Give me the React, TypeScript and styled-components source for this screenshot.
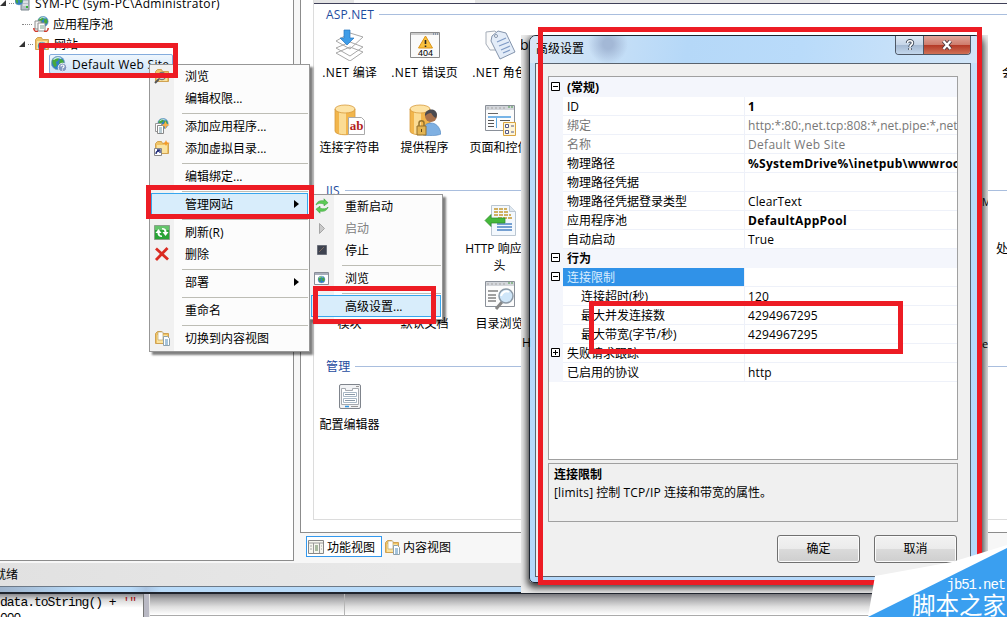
import React from "react";
import styled, { createGlobalStyle } from "styled-components";

const Global = createGlobalStyle`
  html, body { margin: 0; padding: 0; overflow: hidden; }
  body { font: 12px "Open Sans", "Noto Sans CJK SC", sans-serif; color: #000; background: #fff; }
  * { box-sizing: border-box; }
  svg { display: block; flex: none; }
`;

const Screen = styled.div`
  position: relative;
  width: 1007px;
  height: 617px;
  overflow: hidden;
  display: flex;
  flex-direction: column;
  white-space: nowrap;
`;

const T = styled.span<{ $sp?: number }>`
  letter-spacing: ${(p) => p.$sp ?? 0}px;
`;

/* ---------- manager window ---------- */
const Work = styled.div`
  display: flex;
  height: 563px;
  background: #f7f7f7;
`;
const Tree = styled.div`
  width: 294px;
  height: 561px;
  background: #fff;
  border-right: 1px solid #8c8c8c;
  border-bottom: 1px solid #8c8c8c;
  overflow: hidden;
`;
const TreeRow = styled.div<{ $indent: number; $first?: boolean }>`
  display: flex;
  align-items: center;
  height: ${(p) => (p.$first ? 18 : 20)}px;
  margin-top: ${(p) => (p.$first ? -6 : 0)}px;
  margin-bottom: ${(p) => (p.$first ? 2 : 0)}px;
  padding-left: ${(p) => p.$indent}px;
  gap: 4px;
`;
const Dots = styled.i<{ $w: number }>`
  width: ${(p) => p.$w}px;
  border-top: 1px dotted #888;
  margin-right: -3px;
`;
const Twist = styled.i`
  width: 0;
  height: 0;
  border-left: 6px solid transparent;
  border-bottom: 6px solid #333;
  margin-right: -1px;
`;
const Selected = styled.div`
  display: flex;
  align-items: center;
  gap: 5px;
  width: 124px;
  height: 20px;
  padding-left: 1px;
  border: 1px solid #84acdd;
  border-radius: 2px;
  background: linear-gradient(#eef6fd, #cfe4f8);
`;
const Right = styled.div`
  flex: 1;
  margin-left: 6px;
  display: flex;
  flex-direction: column;
  min-width: 0;
`;
const RightFrame = styled.div`
  height: 533px;
  border-left: 1px solid #8c8c8c;
  border-bottom: 1px solid #8c8c8c;
  background: #fff;
  padding-left: 12px;
`;
const Pane = styled.div`
  height: 520px;
  border-left: 1px solid #dcdcdc;
  border-bottom: 1px solid #dcdcdc;
  overflow: hidden;
`;
const PaneTop = styled.div`
  height: 4px;
  border-bottom: 1px solid #3f4058;
  background: linear-gradient(90deg, #e4e4e4 40px, #fafafa 40px, #fafafa 161px, #e4e4e4 161px, #e4e4e4 516px, #fafafa 516px);
`;
const Section = styled.div`
  height: 20px;
  padding-left: 12px;
  display: flex;
  align-items: center;
  gap: 5px;
  color: #1e4ca0;
  letter-spacing: 0.15px;
  &::after {
    content: "";
    flex: 1;
    border-top: 1px solid #a9bede;
  }
`;
const Tiles = styled.div`
  display: grid;
  grid-template-columns: repeat(3, 75px);
  grid-auto-rows: 75px;
  margin-bottom: 6px;
  margin-left: -2px;
`;
const Tile = styled.div`
  display: flex;
  flex-direction: column;
  align-items: center;
  padding-top: 5px;
  gap: 3px;
  line-height: 17px;
  text-align: center;
`;
const Views = styled.div`
  display: flex;
  align-items: center;
  height: 30px;
  padding: 0 0 3px 6px;
  gap: 2px;
`;
const ViewTab = styled.div<{ $on?: boolean }>`
  display: flex;
  align-items: center;
  gap: 3px;
  height: 21px;
  width: 76px;
  padding-left: ${(p) => (p.$on ? 1 : 0)}px;
  border: ${(p) => (p.$on ? "1px solid #3399ee" : "0")};
  background: ${(p) => (p.$on ? "#fff" : "none")};
`;
const Status = styled.div`
  height: 23px;
  line-height: 24px;
  margin-left: -6px;
  background: linear-gradient(90deg, #e1e1e1, #e8e8e8 40%);
`;
const FrameEdge = styled.div`
  height: 8px;
  border-top: 1px solid #6d7a88;
  border-bottom: 2px solid #20252e;
  background: linear-gradient(90deg, #9fb4cc, #b9dbf9 8%, #b9dbf9 13%, #a9c4e2 14.5%, #b9dbf9 16%);
`;
const Editor = styled.div`
  flex: 1;
  display: flex;
  background: linear-gradient(#77777c, #a8a8aa 20%, #dedede 55%, #fff 90%);
`;
const Code = styled.div`
  width: 144px;
  height: 23px;
  overflow: hidden;
  padding-top: 1px;
  border-right: 1px solid #777;
  font: 13px/16px "Liberation Mono", "Noto Sans CJK SC", monospace;
  letter-spacing: -1px;
  background: linear-gradient(#8a8a8e, #d8d8d8 25%, #fff 60%);
`;
const Quote = styled.span`
  color: #a31515;
`;
const Blank = styled.div<{ $w?: number }>`
  ${(p) => (p.$w ? `width: ${p.$w}px; border-right: 1px solid #b5b5b5;` : "flex: 1;")}
  border-bottom: 1px solid #aaa;
  height: 22px;
`;
const Rail = styled.div`
  width: 6px;
  height: 23px;
  background: #b9b9c4;
  border-right: 1px solid #e8e8e8;
`;

/* ---------- menus ---------- */
const Menu = styled.div<{ $x: number; $y: number; $w: number; $h: number }>`
  position: absolute;
  left: ${(p) => p.$x}px;
  top: ${(p) => p.$y}px;
  width: ${(p) => p.$w}px;
  height: ${(p) => p.$h}px;
  border: 1px solid #979797;
  background: linear-gradient(90deg, #f1f1f1 24px, #fcfcfc 24px);
  box-shadow: 3px 3px 2px rgba(0, 0, 0, 0.5);
`;
const Item = styled.div<{ $on?: boolean; $off?: boolean }>`
  display: flex;
  align-items: center;
  height: 22px;
  margin: 0 1px 0 1px;
  padding-left: 2px;
  color: ${(p) => (p.$off ? "#808080" : "#000")};
  border: 1px solid ${(p) => (p.$on ? "#37a6ee" : "transparent")};
  background: ${(p) => (p.$on ? "#d8edfb" : "transparent")};
`;
const Slot = styled.span`
  width: 31px;
  flex: none;
`;
const Arrow = styled.i`
  margin-left: auto;
  margin-right: 8px;
  border: 4px solid transparent;
  border-left: 5px solid #000;
  border-right: 0;
`;
const Sep = styled.div`
  height: 6px;
  margin: 0 1px 0 32px;
  padding-top: 4px;
  &::after {
    content: "";
    display: block;
    border-top: 1px solid #bdbdb5;
  }
`;

/* ---------- dialog ---------- */
const DialogShade = styled.div`
  position: absolute;
  left: 521px;
  top: 35px;
  width: 467px;
  height: 558px;
  overflow: hidden;
  background: #ececec;
  display: flex;
  padding: 0 6px 10px 8px;
`;
const Peek = styled.span<{ $x: number; $y: number; $s?: number }>`
  position: absolute;
  left: ${(p) => p.$x}px;
  top: ${(p) => p.$y}px;
  font-size: ${(p) => p.$s ?? 12}px;
  line-height: 16px;
  z-index: 1;
`;
const Dialog = styled.div`
  position: relative;
  width: 453px;
  flex: none;
  height: 548px;
  border: 1px solid #1b2430;
  border-radius: 7px 7px 5px 5px;
  background: linear-gradient(180deg, #c9e1f8 0, #b9dbfb 30%, #b4d8fa);
  padding: 0 10px 6px 5px;
  box-shadow: 0 3px 7px 2px rgba(0, 0, 0, 0.75);
`;
const TitleBar = styled.div`
  display: flex;
  justify-content: space-between;
  height: 27px;
  line-height: 26px;
  margin: 0 -10px 0 -5px;
  padding: 0 10px 0 6px;
  border-radius: 6px 6px 0 0;
  background: radial-gradient(circle at 78px 8px, #a3b8d6 0 5px, transparent 20px), linear-gradient(100deg, #d9e7f5, #b5d8f8 35%, #b9dbfa 60%, #d3e6f8);
`;
const Caption = styled.div`
  display: flex;
  height: 19px;
  border: 1px solid #4e5866;
  border-top: 0;
  border-radius: 0 0 4px 4px;
  overflow: hidden;
`;
const CapButton = styled.div<{ $close?: boolean }>`
  width: ${(p) => (p.$close ? 46 : 28)}px;
  display: flex;
  align-items: center;
  justify-content: center;
  background: ${(p) =>
    p.$close
      ? "linear-gradient(#e2a59a, #cf7d6d 48%, #b53a27 52%, #cf7156)"
      : "linear-gradient(#dfe9f5, #c6d5e7 48%, #a5b9d2 52%, #c3d7ec)"};
  border-right: ${(p) => (p.$close ? "0" : "1px solid #4e5866")};
`;
const Client = styled.div`
  height: 514px;
  border: 1px solid #59626d;
  background: #f0f0f0;
  padding: 12px 11px 0 12px;
`;
const Grid = styled.div`
  width: 410px;
  height: 384px;
  border: 1px solid #a0a0a0;
  background: #fff;
`;
const Prop = styled.div<{ $cat?: boolean; $off?: boolean; $first?: boolean }>`
  display: flex;
  height: ${(p) => (p.$first ? 20 : 19)}px;
  padding-top: ${(p) => (p.$first ? 1 : 0)}px;
  line-height: 20px;
  font-weight: ${(p) => (p.$cat ? 700 : 400)};
  color: ${(p) => (p.$off ? "#777" : "#000")};
  background: ${(p) => (p.$cat ? "#f4f6fc" : "#fff")};
`;
const Gutter = styled.div`
  width: 14px;
  background: #f4f6fc;
  padding: 4px 0 0 2px;
`;
const Name = styled.div<{ $sub?: boolean; $sel?: boolean; $cat?: boolean }>`
  width: 181px;
  padding-left: ${(p) => (p.$sub ? 18 : 4)}px;
  color: ${(p) => (p.$sel ? "#d9edff" : "inherit")};
  background: ${(p) => (p.$sel ? "#3092e8" : "none")};
  border-bottom: 1px solid ${(p) => (p.$cat ? "transparent" : "#eef1f9")};
`;
const Value = styled.div<{ $bold?: boolean; $sp?: number }>`
  flex: 1;
  overflow: hidden;
  padding-left: 3px;
  border-left: 1px solid #eef1f9;
  border-bottom: 1px solid #eef1f9;
  font-weight: ${(p) => (p.$bold ? 700 : 400)};
  letter-spacing: ${(p) => p.$sp ?? 0.12}px;
`;
const Help = styled.div`
  width: 410px;
  height: 59px;
  margin-top: 3px;
  border: 1px solid #a0a0a0;
  padding: 2px 5px;
  line-height: 18px;
`;
const Actions = styled.div`
  display: flex;
  justify-content: flex-end;
  gap: 14px;
  width: 409px;
  margin-top: 13px;
`;
const Button = styled.div`
  width: 83px;
  height: 28px;
  line-height: 26px;
  text-align: center;
  border: 1px solid #707070;
  border-radius: 3px;
  box-shadow: inset 0 0 0 1px #fbfbfb;
  background: linear-gradient(#f2f2f2, #ebebeb 48%, #dadada 52%, #cecece);
`;

const SideStrip = styled.div`
  position: absolute;
  left: 988px;
  top: 35px;
  width: 19px;
  height: 550px;
  overflow: hidden;
  background: linear-gradient(#fff 155px, #a9bede 155px, #a9bede 156px, #fff 156px, #fff 331px, #a9bede 331px, #a9bede 332px, #fff 332px, #fff 484px, #dcdcdc 484px, #dcdcdc 485px, #fff 485px, #fff 497px, #8c8c8c 497px, #8c8c8c 498px, #f7f7f7 498px, #f7f7f7 528px, #e8e8e8 528px);
`;

const Mark = styled.div<{ $x: number; $y: number; $w: number; $h: number }>`
  position: absolute;
  left: ${(p) => p.$x}px;
  top: ${(p) => p.$y}px;
  width: ${(p) => p.$w}px;
  height: ${(p) => p.$h}px;
  border: 5px solid #ed1c24;
`;
const Watermark = styled.div`
  position: absolute;
  left: 867px;
  top: 545px;
  width: 140px;
  height: 72px;
  color: #fff;
  text-align: right;
  > svg { position: absolute; inset: 0; }
`;
const Site = styled.div`
  position: relative;
  padding: 32px 2px 0 0;
  font: 14px/16px "Liberation Mono", monospace;
  letter-spacing: -1.1px;
`;
const Brand = styled.div`
  position: relative;
  font: 23.5px/22px "Noto Sans CJK SC", sans-serif;
  padding-right: 1px;
`;

/* ---------- icons ---------- */
const S16 = ({ children }: { children: React.ReactNode }) => (
  <svg width="16" height="16" viewBox="0 0 16 16">{children}</svg>
);
const S32 = ({ children }: { children: React.ReactNode }) => (
  <svg width="32" height="32" viewBox="0 0 32 32">{children}</svg>
);
const GlobeShape = ({ x, y, r }: { x: number; y: number; r: number }) => (
  <g transform={`translate(${x} ${y}) scale(${r / 6})`}>
    <circle r="6" fill="#2f7fc6" stroke="#7fa5bd" strokeWidth=".7" />
    <path d="M-5 -3 Q-2 -6 1 -5 L0 -2 L-2 -1 L-1 2 L-3 4 L-5 0Z M2 -4 L5 -2 L5 2 L2 3 L1 0Z" fill="#48a83c" />
    <path d="M-4 -3 Q-1 -6 3 -4" stroke="#d5eefb" fill="none" />
  </g>
);
const ServerIcon = () => (
  <S16>
    <path d="M6 1h8v14H6z" fill="#b6c0c8" stroke="#7b858e" />
    <path d="M8 4h5M8 7h5M8 10h5" stroke="#fff" />
    <path d="M11 12h2" stroke="#35b335" strokeWidth="2" />
    <GlobeShape x={4} y={6} r={4} />
  </S16>
);
const PoolIcon = () => (
  <S16>
    <GlobeShape x={10} y={5.5} r={5.2} />
    <path d="M2 5h6v8H2z" fill="#f4f4f4" stroke="#8d8d8d" />
    <path d="M5 7h7v8H5z" fill="#fff" stroke="#8d8d8d" />
    <path d="M7 10h4M7 12h4" stroke="#76a38d" />
    <path d="M.8 12c0 3 2 4 4 3M15.200 12c0 3-2 4-4 3" stroke="#d0392c" strokeWidth="1.500" fill="none" />
  </S16>
);
const FolderIcon = ({ kind }: { kind?: "globe" | "find" | "link" | "page" }) => (
  <S16>
    <path d="M1.500 3.500l2-2h4l1 2h6v10h-13z" fill="#efc365" stroke="#d0a252" />
    <path d="M3 5h10v8H3z" fill="#fae3a0" />
    {kind === "globe" && <GlobeShape x={8} y={10} r={4} />}
    {kind === "find" && (
      <g><circle cx="8" cy="8" r="3.500" fill="#e5f2fb" stroke="#777" strokeWidth="1.300" /><path d="M5 11l-4 4" stroke="#555" strokeWidth="2" /></g>
    )}
    {kind === "link" && (
      <g><path d="M.5 8.500h7v7h-7z" fill="#fff" stroke="#888" /><path d="M2 14c0-2 1-3 3-3M3 10h3v3" stroke="#232f7a" fill="none" strokeWidth="1.300" /><path d="M12 0l1 2.300 3 .7-3 1-1 2-1-2-2-1 2-.7z" fill="#f59a28" /></g>
    )}
    {kind === "page" && (
      <g><path d="M4 2h5v8H4z" fill="#fff" stroke="#bba46b" strokeWidth=".7" /><path d="M9.500 6.500h4l2 2v7h-6z" fill="#fff" stroke="#8da2ae" /><path d="M11 10h3M11 12h3M11 14h3" stroke="#4a88b8" /></g>
    )}
  </S16>
);
const SiteIcon = () => (
  <S16>
    <GlobeShape x={7} y={7} r={6.7} />
    <circle cx="11.500" cy="11.500" r="4.300" fill="#8298c0" stroke="#e8eefa" />
    <path d="M10 10.500c0-2 3-2 3 0 0 1-1.500 1-1.500 2M11.500 13.500v1" stroke="#fff" fill="none" strokeWidth="1.200" />
  </S16>
);
const AddAppIcon = () => (
  <S16>
    <GlobeShape x={9} y={5.5} r={5.2} />
    <path d="M1.500 5.500h6v8h-6z" fill="#fff" stroke="#999" />
    <path d="M3.500 7.500h6v8h-6z" fill="#fff" stroke="#888" />
    <path d="M5 10h3M5 12h3M5 14h3" stroke="#7397a5" />
    <path d="M11.500 3l1.200 2.800 3 1.200-3 1.200-1.200 3-1.200-3-3-1.200 3-1.200z" fill="#f8b04c" />
  </S16>
);
const RefreshIcon = () => (
  <S16>
    <path d="M.5 1.500h15v14H.5z" fill="#28a336" stroke="#8aa08a" />
    <path d="M1 2h14v4H1z" fill="#64c46b" />
    <path d="M1.500 9l3-4 3 4H5.500c0 2 1 2.500 2.500 2.500v1.500c-3 0-4.500-1.500-4.500-4z" fill="#fff" />
    <path d="M14.500 8l-3 4-3-4h2c0-2-1-2.500-2.500-2.500V4c3 0 4.500 1.500 4.500 4z" fill="#fff" />
  </S16>
);
const DeleteIcon = () => (
  <S16><path d="M2 2.500l12 11M13.500 2L2 14" stroke="#da2b21" strokeWidth="2.800" /></S16>
);
const RestartIcon = () => (
  <S16>
    <path d="M2 7c1-4 5-5 8-4V.8l4 4-4 3V6C7 5 4 5 2 7z M14 9c-1 4-5 5-8 4v2.200l-4-4 4-3v2c3 1 6 1 8-1z" fill="#5ccb55" stroke="#3aa33c" strokeWidth=".6" />
  </S16>
);
const PlayIcon = () => (
  <S16><path d="M5.500 3.500l5 5-5 5z" fill="#c9c9c9" stroke="#a5a5a5" /></S16>
);
const StopIcon = () => (
  <S16><path d="M3.500 3.500h9v9h-9z" fill="#3e4350" stroke="#6b6f7a" /><path d="M5 10l5-5" stroke="#7d6a63" /></S16>
);
const BrowserIcon = () => (
  <S16><path d="M.5 2.500h14v12H.5z" fill="#fff" stroke="#888d96" /><path d="M1 3h13v2H1z" fill="#a9aebb" /><GlobeShape x={7.5} y={9.5} r={3.5} /></S16>
);
const FeaturesIcon = () => (
  <S16><path d="M.5 1.500h15v13H.5z" fill="#f6f6ef" stroke="#878787" /><path d="M1 4h14M5.500 4v10M11.500 4v10" stroke="#9a9a9a" /><path d="M7 7h3M7 9h3M7 11h3" stroke="#5b7c51" /><path d="M2 7h2M2 10h2M13 7h1M13 10h1" stroke="#aaa" /></S16>
);
const CompileIcon = () => (
  <S32>
    <path d="M2 24l14-6 13 5-13 9z M2 19l14-6 13 5-13 9z M2 12l14-8 13 4-13 12z" fill="#fff" stroke="#a8a8a8" />
    <path d="M10 1h6v8h4l-7 7-7-7h4z" fill="#3f9de8" stroke="#2776c0" strokeWidth=".7" />
  </S32>
);
const Error404Icon = () => (
  <S32>
    <path d="M1.500 3.500h29v25h-29z" fill="#fafafa" stroke="#8a8a8a" />
    <path d="M2 5h28" stroke="#ccc" strokeWidth="2" /><path d="M24 5h1M26 5h1M28 5h1" stroke="#435e85" />
    <path d="M16.500 7l7 12h-14z" fill="#f9c13d" stroke="#dc9418" />
    <path d="M16.500 11v4M16.500 16.500v1.500" stroke="#222" strokeWidth="1.600" />
    <text x="16.500" y="27" fontSize="9" fontFamily="Liberation Sans" textAnchor="middle">404</text>
  </S32>
);
const TagIcon = () => (
  <S32>
    <path d="M2 3l9-1 3 3v16l-8 0-4-6z" fill="#fafafa" stroke="#a5adb8" />
    <path d="M8 7l6-5 8 2 9 19-15 7-9-18z" fill="#e3ecf8" stroke="#8494ac" />
    <circle cx="12" cy="7" r="1.500" fill="#fff" stroke="#8494ac" />
    <path d="M13 13l9-4M15 17l10-4M17 21l9-4M19 24l7-3" stroke="#7f9ac5" strokeWidth="1.200" />
  </S32>
);
const Cylinder = () => (
  <g><path d="M1 5v22c0 5 20 5 20 0V5z" fill="#f2b64c" /><path d="M5 8v22c2 1 5 1 7 1V8z" fill="#fbdc94" /><ellipse cx="11" cy="5" rx="10" ry="4" fill="#fde3a5" stroke="#d79b3c" strokeWidth=".8" /><path d="M1 5v22c0 5 20 5 20 0V5" fill="none" stroke="#d79b3c" strokeWidth=".8" /></g>
);
const ConnIcon = () => (
  <S32>
    <Cylinder />
    <path d="M14.500 13.500h13l3 3v14h-16z" fill="#fff" stroke="#aaa" />
    <text x="22.500" y="26" fontSize="13" fontFamily="Liberation Serif" fontWeight="700" fill="#b21e1e" textAnchor="middle">ab</text>
  </S32>
);
const ProviderIcon = () => (
  <S32>
    <Cylinder />
    <path d="M14 31c-1-10 4-12 8-12s9 3 10 11c-4 2-13 2-18 1z" fill="#7fb0e2" stroke="#4e83bd" strokeWidth=".6" />
    <circle cx="22" cy="12" r="6" fill="#a8714b" /><path d="M16 12c-1-8 12-9 12-1l-1 3c-3-1-4-4-5-5-2 0-4 1-6 3z" fill="#4a4a50" />
    <path d="M8 22h9v9H8z" fill="#e4b552" stroke="#93712c" /><path d="M10 22v-3c0-3 5-3 5 0v3" fill="none" stroke="#93712c" strokeWidth="1.500" /><path d="M12.500 25v3" stroke="#614613" />
  </S32>
);
const PageIcon = ({ kind }: { kind: "ctrl" | "find" }) => (
  <S32>
    <path d="M1.500 1.500h29v25h-29z" fill="#fcfcfc" stroke="#8a9099" />
    <path d="M2 4h28" stroke="#d2d5da" strokeWidth="4" /><path d="M3 4h18" stroke="#a5a5a5" strokeDasharray="2 2" /><path d="M24 3h2M27 3h2" stroke="#4a9a4a" />
    {kind === "ctrl" ? (
      <g><path d="M4 9.500h10" stroke="#666" /><path d="M4 13h23" stroke="#4b9de0" strokeWidth="1.500" /><path d="M4 16.500h6M4 19.500h6M4 22.500h6M16 16.500h10" stroke="#555" /><path d="M12.500 14v10" stroke="#5aa5e0" /><path d="M19.500 18.500h12v13h-12z" fill="#fdf5da" stroke="#d9a441" /><path d="M21.500 20.500h3v3h-3zM21.500 26.500h3v3h-3z" fill="#fff" stroke="#555b88" /><path d="M27 22h3M27 28h3" stroke="#555b88" /></g>
    ) : (
      <g><path d="M4 11h10M4 15h8M4 18h8M4 21h8" stroke="#444" strokeWidth="1.200" /><path d="M18 22l-6 7" stroke="#888" strokeWidth="3" /><circle cx="22" cy="16" r="7" fill="#cfe6f9" stroke="#8b99a6" strokeWidth="1.500" /><path d="M17 16c1-4 5-6 8-4" stroke="#fff" strokeWidth="2" fill="none" /></g>
    )}
  </S32>
);
const HeadersIcon = () => (
  <S32>
    <path d="M7.500.5h18l6 6v24h-24z" fill="#f3f8fd" stroke="#bac6d2" /><path d="M25.500.5v6h6" fill="#dfe8f0" stroke="#bac6d2" />
    <path d="M10 4h13M10 7h15M10 10h17M14 13h14" stroke="#c59830" strokeWidth="1.700" strokeDasharray="4 1" />
    <path d="M13 19h15M13 22h15M13 25h15" stroke="#4c83c4" strokeWidth="1.300" />
    <path d="M1 15.500l6-6v3.500h14v5H7v3.500z" fill="#45b83b" stroke="#2c8b2a" strokeWidth=".7" />
  </S32>
);
const ConfigIcon = () => (
  <S32>
    <rect x="5.500" y="3.500" width="21" height="24" rx="1.500" fill="#f1f2f4" stroke="#7f848c" />
    <path d="M7.500 7.500h4v2h7v-2h6v16h-17z" fill="#fff" stroke="#a5a9af" />
    <path d="M9.500 11.500h13v4h-13zM9.500 17.500h13v4h-13z" fill="#fff" stroke="#a9b8c6" />
    <path d="M11 13.500h10M11 19.500h10" stroke="#8a98a6" /><path d="M11 25.500h4" stroke="#2f93df" strokeWidth="1.500" /><path d="M17 25.500h7M22 5.500h3" stroke="#999" />
  </S32>
);
const Expander = ({ open }: { open: boolean }) => (
  <svg width="9" height="9" viewBox="0 0 9 9"><path d="M.5.5h8v8h-8z" fill="#fff" stroke="#000" /><path d={open ? "M2 4.500h5" : "M2 4.500h5M4.500 2v5"} stroke="#000" /></svg>
);

type MenuEntry = { label?: React.ReactNode; icon?: React.ReactNode; on?: boolean; off?: boolean; arrow?: boolean };
const siteMenu: MenuEntry[] = [
  { label: "浏览", icon: <FolderIcon kind="find" /> },
  { label: "编辑权限..." },
  {},
  { label: "添加应用程序...", icon: <AddAppIcon /> },
  { label: "添加虚拟目录...", icon: <FolderIcon kind="link" /> },
  {},
  { label: "编辑绑定..." },
  {},
  { label: "管理网站", on: true, arrow: true },
  {},
  { label: "刷新(R)", icon: <RefreshIcon /> },
  { label: "删除", icon: <DeleteIcon /> },
  {},
  { label: "部署", arrow: true },
  {},
  { label: "重命名" },
  {},
  { label: "切换到内容视图", icon: <FolderIcon kind="page" /> },
];
const manageMenu: MenuEntry[] = [
  { label: "重新启动", icon: <RestartIcon /> },
  { label: "启动", icon: <PlayIcon />, off: true },
  { label: "停止", icon: <StopIcon /> },
  {},
  { label: "浏览", icon: <BrowserIcon /> },
  {},
  { label: "高级设置...", on: true },
];
const Entries = ({ list }: { list: MenuEntry[] }) => (
  <>
    {list.map((m, i) =>
      m.label ? (
        <Item key={i} $on={m.on} $off={m.off}>
          <Slot>{m.icon}</Slot>
          {m.label}
          {m.arrow && <Arrow />}
        </Item>
      ) : (
        <Sep key={i} />
      )
    )}
  </>
);

type PropRow = { n: string; v?: string; cat?: boolean; off?: boolean; bold?: boolean; sub?: boolean; sel?: boolean; ex?: boolean; sp?: number };
const props: PropRow[] = [
  { n: "(常规)", cat: true, ex: true },
  { n: "ID", v: "1", bold: true },
  { n: "绑定", v: "http:*:80:,net.tcp:808:*,net.pipe:*,net.msmq", off: true, sp: 0.02 },
  { n: "名称", v: "Default Web Site", off: true, sp: 0.3 },
  { n: "物理路径", v: "%SystemDrive%\\inetpub\\wwwroot", bold: true, sp: 0.27 },
  { n: "物理路径凭据" },
  { n: "物理路径凭据登录类型", v: "ClearText" },
  { n: "应用程序池", v: "DefaultAppPool", bold: true, sp: 0.35 },
  { n: "自动启动", v: "True" },
  { n: "行为", cat: true, ex: true },
  { n: "连接限制", sel: true, ex: true },
  { n: "连接超时(秒)", v: "120", sub: true },
  { n: "最大并发连接数", v: "4294967295", sub: true },
  { n: "最大带宽(字节/秒)", v: "4294967295", sub: true },
  { n: "失败请求跟踪", ex: false },
  { n: "已启用的协议", v: "http" },
];

export default function App() {
  return (
    <Screen>
      <Global />
      <Work>
        <Tree>
          <TreeRow $indent={0} $first><Twist /><Dots $w={5} /><ServerIcon /><T $sp={0.3}>SYM-PC (sym-PC\Administrator)</T></TreeRow>
          <TreeRow $indent={22}><Dots $w={10} /><PoolIcon />应用程序池</TreeRow>
          <TreeRow $indent={19}><Twist /><Dots $w={5} /><FolderIcon kind="globe" />网站</TreeRow>
          <TreeRow $indent={49}><Selected><SiteIcon /><T $sp={0.28}>Default Web Site</T></Selected></TreeRow>
        </Tree>
        <Right>
          <RightFrame>
            <Pane>
              <PaneTop />
              <Section>ASP.NET</Section>
              <Tiles>
                <Tile><CompileIcon /><div><T $sp={0.4}>.NET </T>编译</div></Tile>
                <Tile><Error404Icon /><div><T $sp={0.4}>.NET </T>错误页</div></Tile>
                <Tile><TagIcon /><div><T $sp={0.4}>.NET </T>角色</div></Tile>
                <Tile><ConnIcon />连接字符串</Tile>
                <Tile><ProviderIcon />提供程序</Tile>
                <Tile><PageIcon kind="ctrl" />页面和控件</Tile>
              </Tiles>
              <Section>IIS</Section>
              <Tiles>
                <Tile /><Tile />
                <Tile><HeadersIcon /><div>HTTP 响应标<br />头</div></Tile>
                <Tile><S32>{null}</S32>模块</Tile>
                <Tile><S32>{null}</S32>默认文档</Tile>
                <Tile><PageIcon kind="find" />目录浏览</Tile>
              </Tiles>
              <Section>管理</Section>
              <Tiles><Tile><ConfigIcon />配置编辑器</Tile></Tiles>
            </Pane>
          </RightFrame>
          <Views>
            <ViewTab $on><FeaturesIcon />功能视图</ViewTab>
            <ViewTab><FolderIcon kind="page" />内容视图</ViewTab>
          </Views>
        </Right>
      </Work>
      <Status>就绪</Status>
      <FrameEdge />
      <Editor>
        <Code>data.toString() + <Quote>'"</Quote><br />000</Code>
        <Rail />
        <Blank $w={195} />
        <Blank />
      </Editor>

      <SideStrip>
        <Peek $x={14} $y={30}>会</Peek>
        <Peek $x={8} $y={206}>处</Peek>
      </SideStrip>

      <DialogShade>
        <Peek $x={-1} $y={2} $s={14}>b</Peek>
        <Peek $x={1} $y={300}>H</Peek>
        <Peek $x={461} $y={159} $s={10}>M</Peek>
        <Peek $x={461} $y={301} $s={11}>e</Peek>
        <Dialog>
          <TitleBar>
            高级设置
            <Caption>
              <CapButton><svg width="10" height="12" viewBox="0 0 10 12"><path d="M2.500 4c0-3 5-3 5 0 0 2-2.500 1.500-2.500 4M5 9v2" fill="none" stroke="#3f4a5a" strokeWidth="3.400" /><path d="M2.500 4c0-3 5-3 5 0 0 2-2.500 1.500-2.500 4M5 9v2" fill="none" stroke="#fff" strokeWidth="1.600" /></svg></CapButton>
              <CapButton $close><svg width="12" height="10" viewBox="0 0 12 10"><path d="M2.500 1l7 8M9.500 1l-7 8" stroke="#4b3a40" strokeWidth="4" /><path d="M2.500 1l7 8M9.500 1l-7 8" stroke="#fff" strokeWidth="2.300" /></svg></CapButton>
            </Caption>
          </TitleBar>
          <Client>
            <Grid>
              {props.map((p, i) => (
                <Prop key={p.n} $cat={p.cat} $off={p.off} $first={i === 0}>
                  <Gutter>{p.ex !== undefined && <Expander open={p.ex} />}</Gutter>
                  <Name $sub={p.sub} $sel={p.sel} $cat={p.cat}>{p.n}</Name>
                  {!p.cat && <Value $bold={p.bold} $sp={p.sp}>{p.v}</Value>}
                </Prop>
              ))}
            </Grid>
            <Help><b>连接限制</b><br /><T $sp={0.15}>[limits]</T> 控制 <T $sp={0.15}>TCP/IP</T> 连接和带宽的属性。</Help>
            <Actions><Button>确定</Button><Button>取消</Button></Actions>
          </Client>
        </Dialog>
      </DialogShade>

      <Menu $x={149} $y={64} $w={161} $h={288}><Entries list={siteMenu} /></Menu>
      <Menu $x={309} $y={194} $w={134} $h={126}><Entries list={manageMenu} /></Menu>

      <Mark $x={39} $y={43} $w={139} $h={35} />
      <Mark $x={146} $y={185} $w={168} $h={34} />
      <Mark $x={313} $y={286} $w={123} $h={38} />
      <Mark $x={589} $y={301} $w={314} $h={53} />
      <Mark $x={538} $y={27} $w={444} $h={558} />

      <Watermark>
        <svg width="140" height="72" viewBox="0 0 140 72">
          <path d="M8 31L85 17L140 0V72H1z" fill="#fff" />
          <path d="M1 72L140 3V72z" fill="#3a9ff0" />
        </svg>
        <Site>jb51.net</Site>
        <Brand>脚本之家</Brand>
      </Watermark>
    </Screen>
  );
}
